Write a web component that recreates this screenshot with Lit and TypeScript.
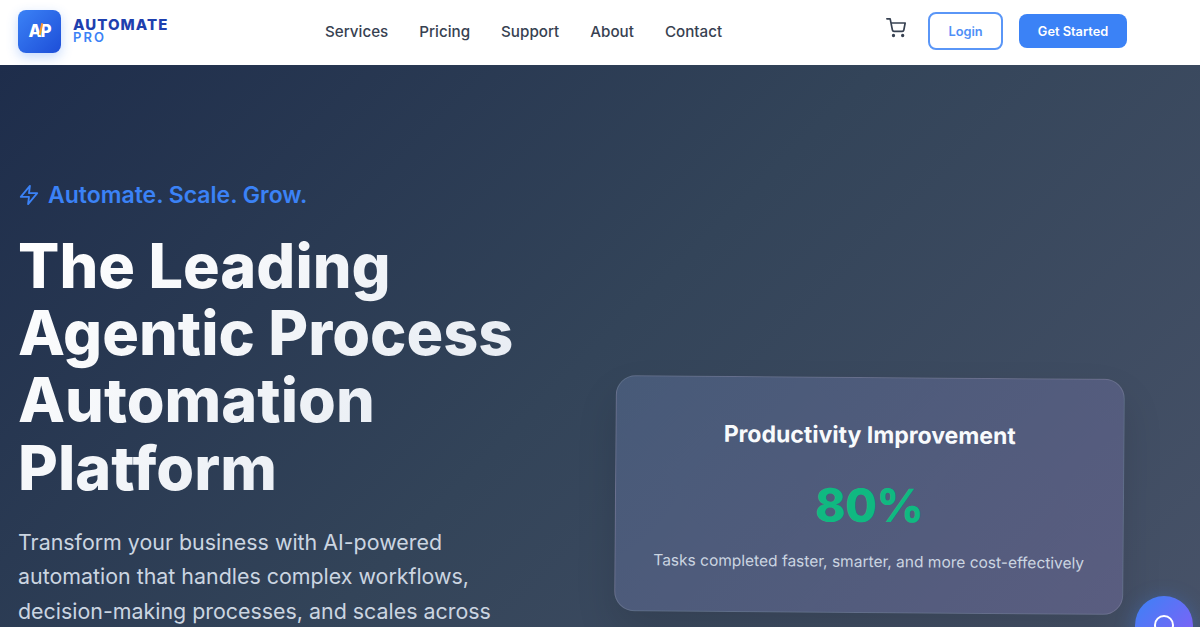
import { LitElement, html, css } from 'lit';
import { customElement } from 'lit/decorators.js';

@customElement('app-root')
export class AppRoot extends LitElement {
  static styles = css`
    :host {
      display: block;
      position: relative;
      height: 627px;
      overflow: hidden;
      font-family: Inter, 'Liberation Sans', sans-serif;
    }

    /* top nav */
    .nav {
      box-sizing: border-box;
      height: 65px;
      background: #ffffff;
      display: flex;
      align-items: center;
      padding: 0 73px 3px 18px;
    }

    .brand {
      display: flex;
      align-items: center;
      gap: 12px;
      width: 307px;
    }

    .logo {
      position: relative;
      width: 43px;
      height: 43px;
      border-radius: 8px;
      background: linear-gradient(135deg, #3b82f6, #1d4ed8);
      box-shadow: 0 4px 12px rgba(59, 130, 246, 0.3);
      display: flex;
      align-items: center;
      justify-content: center;
      color: #ffffff;
      font-size: 17px;
      font-weight: 800;
      letter-spacing: -1px;
    }

    /* orange spark between the A and the P */
    .logo::after {
      content: '';
      position: absolute;
      left: 22px;
      top: 13px;
      width: 1.5px;
      height: 12px;
      background: linear-gradient(180deg, #fb923c, #f59e0b);
      transform: rotate(12deg);
    }

    .brand-text {
      display: flex;
      flex-direction: column;
    }

    .brand-name {
      font-size: 15px;
      line-height: 12px;
      font-weight: 800;
      letter-spacing: 1.05px;
      color: #1e40af;
    }

    .brand-sub {
      font-size: 13px;
      line-height: 12px;
      font-weight: 600;
      letter-spacing: 2.1px;
      color: #3b82f6;
    }

    .links {
      display: flex;
      gap: 31px;
      font-size: 15.2px;
      font-weight: 500;
      color: #374151;
    }

    .actions {
      margin-left: auto;
      display: flex;
      align-items: center;
    }

    .cart {
      width: 20px;
      height: 20px;
      margin-right: 22px;
      margin-top: -7px;
      color: #374151;
    }

    .btn {
      box-sizing: border-box;
      display: flex;
      align-items: center;
      justify-content: center;
      font-size: 12.8px;
      font-weight: 600;
      border-radius: 8px;
    }

    .btn.login {
      width: 75px;
      height: 38px;
      border: 2px solid #5a96f7;
      color: #4f8ff7;
      margin-right: 16px;
    }

    .btn.start {
      width: 108px;
      height: 34px;
      background: #3b82f6;
      color: #ffffff;
    }

    /* hero */
    .hero {
      height: 562px;
      box-sizing: border-box;
      background: linear-gradient(135deg, #1e2d4b 0%, #334459 50%, #475268 100%);
      padding: 116px 76px 0 18px;
      display: grid;
      grid-template-columns: 596.5px 1fr;
    }

    .tag {
      display: flex;
      align-items: center;
      gap: 8px;
      font-size: 23px;
      line-height: 28px;
      font-weight: 600;
      color: #3b82f6;
    }

    .tag svg {
      width: 22px;
      height: 22px;
    }

    h1 {
      margin: 24px 0 0;
      font-size: 61.2px;
      line-height: 67.2px;
      font-weight: 800;
      background: linear-gradient(135deg, #ffffff, #e2e8f0);
      -webkit-background-clip: text;
      background-clip: text;
      color: transparent;
      max-width: 520px;
    }

    .lead {
      margin: 23px 0 0;
      font-size: 21.4px;
      line-height: 34.5px;
      color: #cbd5e1;
      width: 520px;
    }

    .card {
      box-sizing: border-box;
      width: 508.5px;
      height: 236px;
      margin-top: 196px;
      border-radius: 20px;
      border: 1px solid rgba(255, 255, 255, 0.12);
      background: linear-gradient(135deg, #475a78, #5a5d80);
      box-shadow: 0 20px 40px rgba(0, 0, 0, 0.12);
      transform: rotate(0.45deg);
      display: flex;
      flex-direction: column;
      align-items: center;
      padding-top: 41px;
    }

    .card h3 {
      margin: 0;
      font-size: 23px;
      line-height: 32px;
      font-weight: 700;
      color: #f8fafc;
    }

    .value {
      margin-top: 25px;
      font-size: 46px;
      line-height: 58px;
      font-weight: 800;
      letter-spacing: -0.5px;
      color: #10b981;
    }

    .note {
      margin-top: 16px;
      font-size: 15.5px;
      line-height: 24px;
      color: #cbd5e1;
    }

    .fab {
      position: absolute;
      left: 1135px;
      top: 596px;
      width: 58px;
      height: 58px;
      border-radius: 50%;
      background: linear-gradient(135deg, #3b82f6, #8b5cf6);
      box-shadow: 0 4px 20px rgba(59, 130, 246, 0.4);
      display: flex;
      align-items: center;
      justify-content: center;
    }

    .fab svg {
      width: 24px;
      height: 24px;
    }
  `;

  render() {
    const links = ['Services', 'Pricing', 'Support', 'About', 'Contact'];
    return html`
      <header class="nav">
        <div class="brand">
          <div class="logo">AP</div>
          <div class="brand-text">
            <span class="brand-name">AUTOMATE</span>
            <span class="brand-sub">PRO</span>
          </div>
        </div>
        <nav class="links">${links.map((l) => html`<span>${l}</span>`)}</nav>
        <div class="actions">
          <svg class="cart" viewBox="0 0 24 24" fill="none" stroke="currentColor" stroke-width="2" stroke-linecap="round" stroke-linejoin="round">
            <circle cx="9" cy="21" r="1"></circle>
            <circle cx="20" cy="21" r="1"></circle>
            <path d="M1 1h4l2.68 13.39a2 2 0 0 0 2 1.61h9.72a2 2 0 0 0 2-1.61L23 6H6"></path>
          </svg>
          <div class="btn login">Login</div>
          <div class="btn start">Get Started</div>
        </div>
      </header>
      <section class="hero">
        <div>
          <div class="tag">
            <svg viewBox="0 0 24 24" fill="none" stroke="currentColor" stroke-width="2" stroke-linecap="round" stroke-linejoin="round">
              <path d="M13 2 3 14h9l-1 8 10-12h-9l1-8z"></path>
            </svg>
            Automate. Scale. Grow.
          </div>
          <h1>The Leading Agentic Process Automation Platform</h1>
          <p class="lead">
            Transform your business with AI-powered automation that handles complex workflows,
            decision-making processes, and scales across your enterprise
          </p>
        </div>
        <div>
          <div class="card">
            <h3>Productivity Improvement</h3>
            <div class="value">80%</div>
            <div class="note">Tasks completed faster, smarter, and more cost-effectively</div>
          </div>
        </div>
      </section>
      <div class="fab">
        <svg viewBox="0 0 24 24" fill="none" stroke="#ffffff" stroke-width="2">
          <circle cx="12" cy="12" r="9"></circle>
        </svg>
      </div>
    `;
  }
}
